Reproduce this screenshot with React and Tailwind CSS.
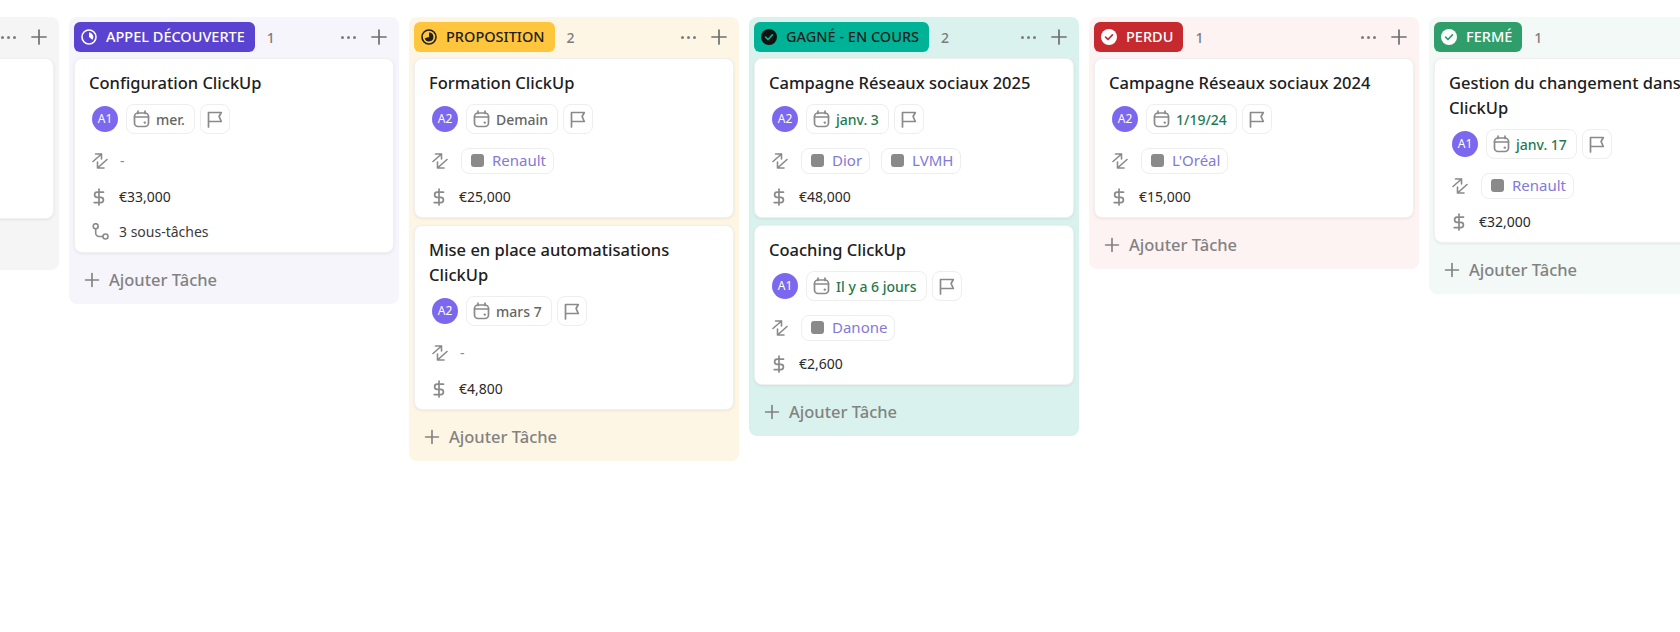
import React from "react";
import { Plus } from "lucide-react";

const CalendarIcon = () => (
  <svg width="17" height="18" viewBox="0 0 17 18" fill="none" stroke="#8a8a8a" strokeWidth="1.7" className="shrink-0">
    <rect x="1.5" y="3" width="14" height="13.5" rx="3.5" />
    <path d="M5 1v2.5M12 1v2.5M1.5 7h14" strokeLinecap="round" />
    <circle cx="11.8" cy="12.6" r="1.2" fill="#8a8a8a" stroke="none" />
  </svg>
);

const FlagIcon = () => (
  <svg width="16" height="17" viewBox="0 0 16 17" fill="none" stroke="#8a8a8a" strokeWidth="1.7" strokeLinejoin="round">
    <path d="M1.5 16V1.5h12.8l-2.2 4 2.2 5H1.5" strokeLinecap="round" />
  </svg>
);

const TransferIcon = () => (
  <svg width="16" height="16" viewBox="0 0 16 16" fill="none" stroke="#8a8a8a" strokeWidth="1.6" strokeLinecap="round" strokeLinejoin="round" className="shrink-0">
    <path d="M1 8.5L9.5 1M3.5 1h6v5" />
    <path d="M15 6.5L5.5 15M5.5 9v6h6.5" />
  </svg>
);

const DollarIcon = () => (
  <svg width="12" height="18" viewBox="0 0 12 18" fill="none" stroke="#8a8a8a" strokeWidth="1.7" strokeLinecap="round" className="shrink-0">
    <path d="M6 1v16" />
    <path d="M10.5 4.2H4.2a2.5 2.5 0 0 0 0 5.2h3.6a2.5 2.5 0 0 1 0 5.2H1.2" />
  </svg>
);

const SubtaskIcon = () => (
  <svg width="17" height="17" viewBox="0 0 17 17" fill="none" stroke="#8a8a8a" strokeWidth="1.6" className="shrink-0">
    <circle cx="3.7" cy="3.2" r="2.5" />
    <circle cx="13.5" cy="13.5" r="2.5" />
    <path d="M3.7 5.7V10a3.5 3.5 0 0 0 3.5 3.5H11" />
  </svg>
);

const StatusIcon = ({ kind, color, inner }) => {
  if (kind === "clock")
    return (
      <svg width="16" height="16" viewBox="0 0 16 16" className="shrink-0">
        <circle cx="8" cy="8" r="7" fill="none" stroke={color} strokeWidth="1.6" />
        <path d="M8 3.6a4.4 4.4 0 0 1 4.4 4.4 4.4 4.4 0 0 1-1 2.8L8 8z" fill={color} />
      </svg>
    );
  if (kind === "half")
    return (
      <svg width="16" height="16" viewBox="0 0 16 16" className="shrink-0">
        <circle cx="8" cy="8" r="7" fill="none" stroke={color} strokeWidth="1.6" />
        <path d="M8 3.6a4.4 4.4 0 1 1-4.2 5.6L8 8z" fill={color} />
      </svg>
    );
  return (
    <svg width="16" height="16" viewBox="0 0 16 16" className="shrink-0">
      <circle cx="8" cy="8" r="8" fill={color} />
      <path d="M4.6 8.2l2.4 2.3 4.4-4.6" fill="none" stroke={inner} strokeWidth="1.7" strokeLinecap="round" strokeLinejoin="round" />
    </svg>
  );
};

const Card = ({ card }) => (
  <div className="bg-white rounded-lg border border-black/[0.06] shadow-[0_1px_3px_rgba(0,0,0,0.07)] pl-[14px] pr-3 pt-[11px] pb-[3px]">
    <div className="text-[16.5px] leading-[25px] font-medium text-[#202020]">{card.title}</div>
    <div className="flex items-center mt-[9px] h-[30px]">
      <div className="w-[26px] h-[26px] ml-[3px] mr-[8px] rounded-full bg-[#7b68ee] text-white text-[12px] flex items-center justify-center shrink-0">
        {card.who}
      </div>
      <div className="h-[30px] pl-[6px] pr-[9px] flex items-center gap-[6px] rounded-lg border border-[#eeeeee] text-[14px]">
        <CalendarIcon />
        <span className={card.late ? "text-[#1f7a52] font-medium" : "text-[#656565] font-medium"}>{card.date}</span>
      </div>
      <div className="w-[30px] h-[30px] ml-[5px] flex items-center justify-center rounded-lg border border-[#eeeeee]">
        <FlagIcon />
      </div>
    </div>
    <div className="mt-[10px] h-[35px] flex items-center">
      <div className="w-[31px] pl-[3px] -mt-[2px] shrink-0">
        <TransferIcon />
      </div>
      {card.tags ? (
        <div className="flex gap-[11px] ml-[1px] -mt-[2px]">
          {card.tags.map((tag) => (
            <div key={tag} className="h-[26px] pl-[9px] pr-[7px] flex items-center gap-[8px] rounded-lg border border-[#eeeeee]">
              <span className="w-[13px] h-[13px] rounded-[3px] bg-[#8a8a8a]" />
              <span className="text-[15px] text-[#8379d8]">{tag}</span>
            </div>
          ))}
        </div>
      ) : (
        <span className="text-[14px] -mt-[2px] text-[#8a8a8a]">-</span>
      )}
    </div>
    <div className="h-[35px] flex items-center">
      <div className="w-[30px] pl-[4px] shrink-0">
        <DollarIcon />
      </div>
      <span className="text-[14px] text-[#2a2a2a]">{card.price}</span>
    </div>
    {card.subtasks && (
      <div className="h-[35px] flex items-center">
        <div className="w-[30px] pl-[3px] shrink-0">
          <SubtaskIcon />
        </div>
        <span className="text-[14px] text-[#3a3a3a]">{card.subtasks}</span>
      </div>
    )}
  </div>
);

const Column = ({ col }) => (
  <div className={`w-[330px] shrink-0 rounded-lg ${col.bg} px-[5px] pt-[5px]`}>
    <div className="flex items-center h-[30px]">
      {col.name && (
        <>
          <div className={`h-[30px] pl-[7px] pr-[10px] flex items-center gap-[9px] rounded-md text-[14.5px] font-medium ${col.chip} ${col.fg}`}>
            <StatusIcon kind={col.icon} color={col.iconColor} inner={col.iconInner} />
            <span>{col.name}</span>
          </div>
          <span className="ml-[12px] text-[14px] font-medium text-[#7c7c7c]">{col.count}</span>
        </>
      )}
      <span className="ml-auto mr-[11px] flex gap-[3px]">
        <i className="w-[3px] h-[3px] rounded-full bg-[#7c7c7c]" />
        <i className="w-[3px] h-[3px] rounded-full bg-[#7c7c7c]" />
        <i className="w-[3px] h-[3px] rounded-full bg-[#7c7c7c]" />
      </span>
      <Plus size={24} color="#6f6f6f" strokeWidth={1.7} className="mr-[3px]" />
    </div>
    <div className="mt-[6px] flex flex-col gap-[7px]">
      {col.cards.map((card) => (
        <Card key={card.title} card={card} />
      ))}
      {col.blank && <div className="h-[161px] bg-white rounded-lg border border-black/[0.06] shadow-[0_1px_3px_rgba(0,0,0,0.07)]" />}
    </div>
    <div className="h-[51px] pt-[3px] flex items-center gap-[6px] pl-[9px] text-[16.5px] font-medium text-[#828282]">
      {col.name && (
        <>
          <Plus size={22} color="#828282" strokeWidth={1.8} className="-ml-[2px]" />
          <span>Ajouter Tâche</span>
        </>
      )}
    </div>
  </div>
);

const columns = [
  { id: "prev", bg: "bg-[#f5f5f5]", blank: true, cards: [] },
  {
    name: "APPEL DÉCOUVERTE",
    count: 1,
    bg: "bg-[#f6f5fc]",
    chip: "bg-[#5a43d0]",
    fg: "text-white",
    icon: "clock",
    iconColor: "#ffffff",
    cards: [{ title: "Configuration ClickUp", who: "A1", date: "mer.", price: "€33,000", subtasks: "3 sous-tâches" }],
  },
  {
    name: "PROPOSITION",
    count: 2,
    bg: "bg-[#fef6e5]",
    chip: "bg-[#ffc53d]",
    fg: "text-[#202020]",
    icon: "half",
    iconColor: "#202020",
    cards: [
      { title: "Formation ClickUp", who: "A2", date: "Demain", tags: ["Renault"], price: "€25,000" },
      { title: "Mise en place automatisations ClickUp", who: "A2", date: "mars 7", price: "€4,800" },
    ],
  },
  {
    name: "GAGNÉ - EN COURS",
    count: 2,
    bg: "bg-[#d9f2ed]",
    chip: "bg-[#00b396]",
    fg: "text-[#202020]",
    icon: "check",
    iconColor: "#111111",
    iconInner: "#00b396",
    cards: [
      { title: "Campagne Réseaux sociaux 2025", who: "A2", date: "janv. 3", late: true, tags: ["Dior", "LVMH"], price: "€48,000" },
      { title: "Coaching ClickUp", who: "A1", date: "Il y a 6 jours", late: true, tags: ["Danone"], price: "€2,600" },
    ],
  },
  {
    name: "PERDU",
    count: 1,
    bg: "bg-[#fef3f3]",
    chip: "bg-[#c62a2f]",
    fg: "text-white",
    icon: "check",
    iconColor: "#ffffff",
    iconInner: "#c62a2f",
    cards: [{ title: "Campagne Réseaux sociaux 2024", who: "A2", date: "1/19/24", late: true, tags: ["L'Oréal"], price: "€15,000" }],
  },
  {
    name: "FERMÉ",
    count: 1,
    bg: "bg-[#f2f9f6]",
    chip: "bg-[#2f9e6a]",
    fg: "text-white",
    icon: "check",
    iconColor: "#ffffff",
    iconInner: "#2f9e6a",
    cards: [{ title: "Gestion du changement dans ClickUp", who: "A1", date: "janv. 17", late: true, tags: ["Renault"], price: "€32,000" }],
  },
];

export default function App() {
  return (
    <div className="w-[1680px] h-[632px] overflow-hidden bg-white font-['Noto_Sans','Open_Sans',sans-serif]">
      <div className="flex items-start gap-[10px] pt-[17px] -ml-[271px]">
        {columns.map((col) => (
          <Column key={col.id || col.name} col={col} />
        ))}
      </div>
    </div>
  );
}
